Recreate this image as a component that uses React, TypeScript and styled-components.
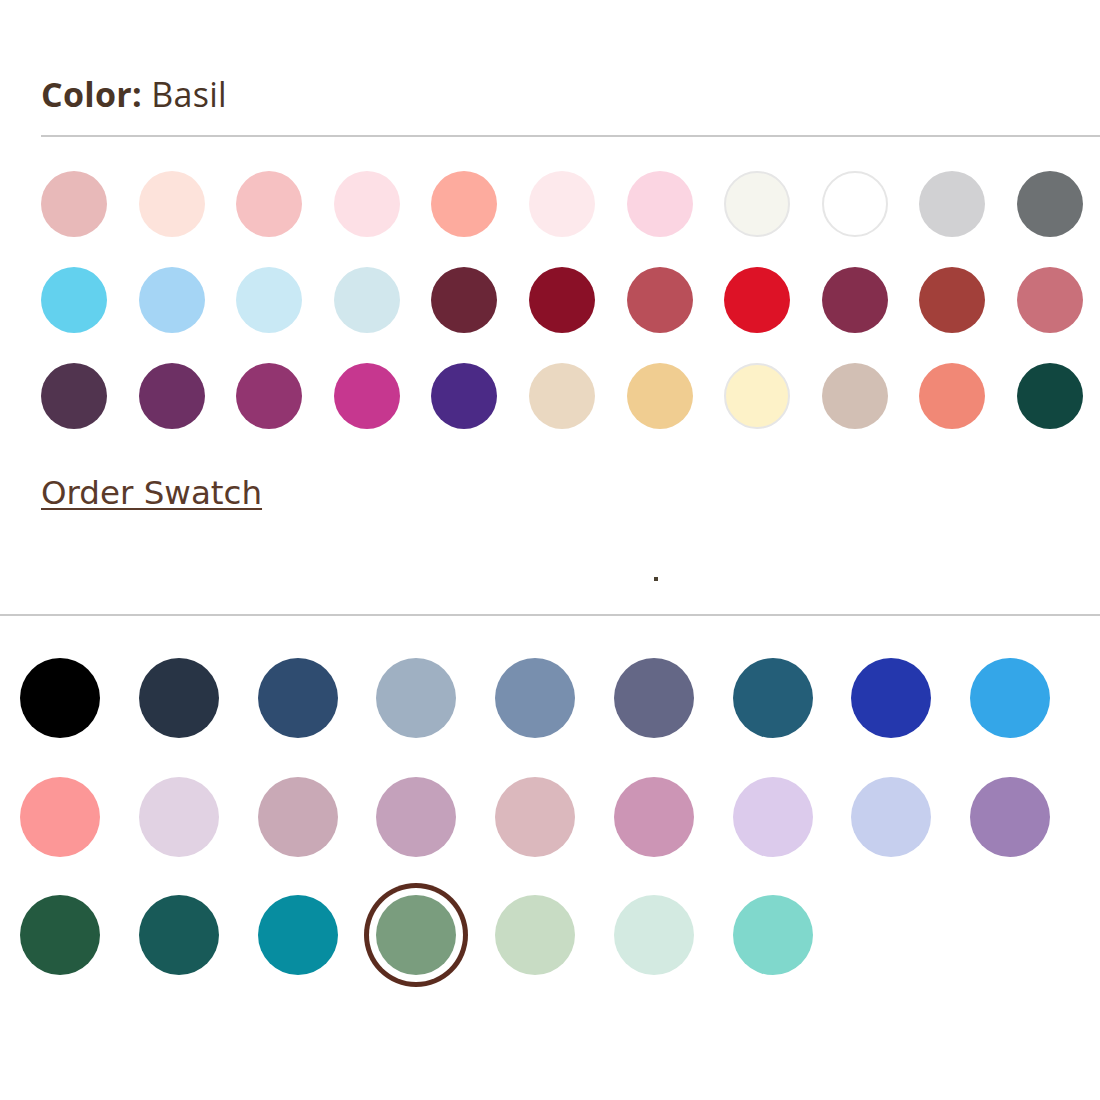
import React from "react";
import styled, { createGlobalStyle } from "styled-components";

const Global = createGlobalStyle`
  html, body { margin: 0; padding: 0; background: #fff; overflow: hidden; }
  body { font-family: "Open Sans", "Liberation Sans", sans-serif; }
`;

const topColors: string[] = [
  "#e8b9b9", "#fde3db", "#f6c1c2", "#fde0e6", "#fdab9e", "#fde9ec", "#fbd5e2", "#f5f5ee", "#ffffff", "#d1d1d3", "#6d7173",
  "#63d1ee", "#a5d5f5", "#c9e9f5", "#d1e7ed", "#6a2637", "#8a1027", "#b94f59", "#dd1226", "#842e4d", "#a2403a", "#c9707a",
  "#51344f", "#6d3064", "#923570", "#c6378f", "#4b2a86", "#ead8c1", "#f0cd91", "#fdf2c8", "#d2bfb4", "#f18876", "#114740",
];
const outlined = new Set(["#f5f5ee", "#ffffff", "#fdf2c8"]);

const bottomColors: string[] = [
  "#000000", "#283445", "#2f4c70", "#9fb0c2", "#788fae", "#646786", "#245e78", "#2437ad", "#34a6e8",
  "#fc9797", "#e1d2e3", "#c9a9b6", "#c4a1bb", "#dbb8bd", "#cc95b5", "#dccbec", "#c6cfee", "#9d80b6",
  "#245a40", "#185a58", "#078da0", "#7a9d7e", "#c8dcc4", "#d3eae1", "#80d8cc",
];
const selectedIndex = 21;

const Page = styled.div`
  width: 1100px;
  height: 1100px;
  overflow: hidden;
`;

const Panel = styled.section`
  padding: 73px 0 0 41px;
`;

const Heading = styled.div`
  font-family: "Open Sans", "Liberation Sans", sans-serif;
  font-size: 34px;
  line-height: 42px;
  letter-spacing: 0.3px;
  color: #4a3526;
  padding-bottom: 20px;
  border-bottom: 2px solid #c9c9c9;
  margin-right: -20px;
  b { font-weight: 700; }
  span { font-weight: 400; }
`;

const TopGrid = styled.div`
  display: grid;
  grid-template-columns: repeat(11, 66px);
  column-gap: 31.6px;
  row-gap: 30px;
  margin-top: 34px;
`;

const Dot = styled.div<{ $color: string; $outlined?: boolean }>`
  width: 66px;
  height: 66px;
  border-radius: 50%;
  box-sizing: border-box;
  background: ${(p) => p.$color};
  border: ${(p) => (p.$outlined ? "2px solid #e6e6e6" : "none")};
`;

const OrderLink = styled.a`
  display: inline-block;
  margin-top: 44px;
  font-family: "DejaVu Sans", Verdana, sans-serif;
  font-size: 32.5px;
  line-height: 40px;
  color: #5a3a2a;
  text-decoration: underline;
  text-underline-offset: 4px;
  text-decoration-thickness: 2px;
`;

const Spacer = styled.div`
  position: relative;
  height: 101px;
`;

const Speck = styled.span`
  position: absolute;
  left: 654px;
  top: 64px;
  width: 4px;
  height: 4px;
  background: #4a4030;
`;

const Divider = styled.hr`
  margin: 0;
  border: 0;
  border-top: 2px solid #c9c9c9;
`;

const BottomGrid = styled.div`
  display: grid;
  grid-template-columns: repeat(9, 80px);
  column-gap: 38.75px;
  row-gap: 38.5px;
  padding: 42px 0 0 20px;
`;

const BigDot = styled.div<{ $color: string; $selected?: boolean }>`
  width: 80px;
  height: 80px;
  border-radius: 50%;
  background: ${(p) => p.$color};
  box-shadow: ${(p) => (p.$selected ? "0 0 0 7px #fff, 0 0 0 12px #5b2c1f" : "none")};
`;

export default function App() {
  return (
    <Page>
      <Global />
      <Panel>
        <Heading>
          <b>Color:</b> <span>Basil</span>
        </Heading>
        <TopGrid>
          {topColors.map((c, i) => (
            <Dot key={i} $color={c} $outlined={outlined.has(c)} />
          ))}
        </TopGrid>
        <OrderLink href="#">Order Swatch</OrderLink>
      </Panel>
      <Spacer>
        <Speck />
      </Spacer>
      <Divider />
      <BottomGrid>
        {bottomColors.map((c, i) => (
          <BigDot key={i} $color={c} $selected={i === selectedIndex} />
        ))}
      </BottomGrid>
    </Page>
  );
}
